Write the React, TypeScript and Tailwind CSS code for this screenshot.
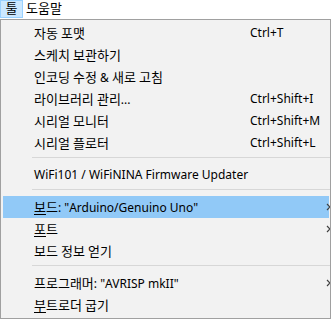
import React from "react";

const font = { fontFamily: '"Noto Sans", "Noto Sans CJK KR", sans-serif' };

function T({ s }: { s: string }) {
  const parts = s.match(/[\uAC00-\uD7A3]+|[^\uAC00-\uD7A3]+/g) || [];
  return (
    <>
      {parts.map((p, i) =>
        /[\uAC00-\uD7A3]/.test(p) ? (
          <span key={i} className="text-[13px]">{p}</span>
        ) : (
          <span key={i} className="text-[12px]">{p}</span>
        )
      )}
    </>
  );
}

function Chevron() {
  return (
    <svg width="5" height="8" viewBox="0 0 5 8" className="absolute right-[-2px] top-1/2 -translate-y-1/2">
      <path d="M1 1 L4 4 L1 7" stroke="#404040" strokeWidth="1.2" fill="none" />
    </svg>
  );
}

type Item = {
  label: React.ReactNode;
  shortcut?: string;
  sub?: boolean;
  active?: boolean;
};

function Row({ label, shortcut, sub, active }: Item) {
  return (
    <div
      className={
        "relative flex h-[22px] items-center ml-[2px] mr-[1px] " +
        (active ? "bg-[#91c9f7]" : "")
      }
    >
      <div className="w-[31px] shrink-0" />
      <div className="flex-1 text-[12px] leading-none text-black whitespace-nowrap">{label}</div>
      {shortcut && (
        <div className="absolute left-[247px] text-[12px] leading-none text-black whitespace-nowrap">{shortcut}</div>
      )}
      {sub && <Chevron />}
    </div>
  );
}

function Sep() {
  return (
    <div className="h-[10px] pt-[3px] pl-[31px]">
      <div className="h-px bg-[#d7d7d7]" />
    </div>
  );
}

function U({ c }: { c: string }) {
  return <span className="underline underline-offset-2 text-[13px]">{c}</span>;
}

export default function App() {
  return (
    <div className="w-[331px] h-[319px] bg-white overflow-hidden" style={font}>
      <div className="h-[19px] flex items-stretch text-[13px] text-black">
        <div className="h-[18px] w-[23px] flex items-center justify-center bg-[#cce8ff] border border-[#99d1ff]">툴</div>
        <div className="h-[18px] flex items-center pl-[3px]">도움말</div>
      </div>
      <div className="h-[300px] border border-[#a0a0a0] bg-[#f2f2f2] pt-[2px] overflow-hidden">
        <Row label={<T s="자동 포맷" />} shortcut="Ctrl+T" />
        <Row label={<T s="스케치 보관하기" />} />
        <Row label={<T s="인코딩 수정 & 새로 고침" />} />
        <Row label={<T s="라이브러리 관리..." />} shortcut="Ctrl+Shift+I" />
        <Row label={<T s="시리얼 모니터" />} shortcut="Ctrl+Shift+M" />
        <Row label={<T s="시리얼 플로터" />} shortcut="Ctrl+Shift+L" />
        <Sep />
        <Row label={<T s="WiFi101 / WiFiNINA Firmware Updater" />} />
        <Sep />
        <Row label={<><U c="보" /><T s={'드: "Arduino/Genuino Uno"'} /></>} sub active />
        <Row label={<><U c="포" /><T s="트" /></>} sub />
        <Row label={<T s="보드 정보 얻기" />} />
        <Sep />
        <Row label={<T s={'프로그래머: "AVRISP mkII"'} />} sub />
        <Row label={<><U c="부" /><T s="트로더 굽기" /></>} />
      </div>
    </div>
  );
}
